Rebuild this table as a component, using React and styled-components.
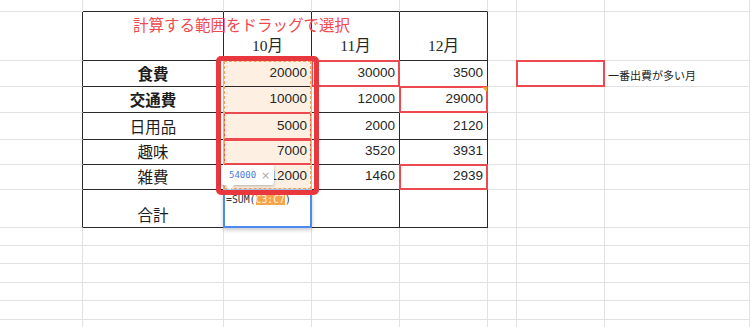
import React from 'react';
import styled, { createGlobalStyle, css } from 'styled-components';

const GlobalStyle = createGlobalStyle`
  html, body { margin: 0; padding: 0; background: #fff; }
  body {
    width: 750px; height: 327px; overflow: hidden;
    font-family: "Liberation Sans", "Noto Sans CJK JP", sans-serif;
  }
`;

const COLS = [83, 141, 88, 88, 88, 29, 88];
const ROWS = [12, 49, 26, 26, 27, 25, 25, 38, 18, 18, 19, 18, 19, 18];
const GRID = '#e2e2e2';
const INK = '#262626';
const MAXRED = '#ec4a50';

const Sheet = styled.div`
  position: relative;
  display: grid;
  grid-template-columns: ${COLS.map((c) => c + 'px').join(' ')} 1fr;
  grid-template-rows: ${ROWS.map((r) => r + 'px').join(' ')};
  width: 750px;
  height: 327px;
  overflow: hidden;
  background: #fff;
`;

const Cell = styled.div`
  position: relative;
  box-sizing: border-box;
  min-width: 0;
  border-right: 1px solid ${(p) => p.$rc};
  border-bottom: 1px solid ${(p) => p.$bc};
  background: ${(p) => (p.$fill ? '#fdf0e2' : 'transparent')};
  display: flex;
  align-items: ${(p) => (p.$top ? 'flex-start' : 'flex-end')};
  justify-content: ${(p) =>
    p.$align === 'right' ? 'flex-end' : p.$align === 'center' ? 'center' : 'flex-start'};
  padding: ${(p) => p.$pad || '0 4px 4px 4px'};
  white-space: nowrap;
  ${(p) =>
    p.$max &&
    css`
      &::after {
        content: '';
        position: absolute;
        top: -1px; left: -1px; right: -1px; bottom: -1px;
        border: 2px solid ${MAXRED};
        z-index: 2;
        pointer-events: none;
      }
    `}
  ${(p) =>
    p.$comment &&
    css`
      &::before {
        content: '';
        position: absolute;
        top: 0; right: 0;
        border-left: 5px solid transparent;
        border-top: 5px solid #f5a12e;
        z-index: 3;
      }
    `}
  ${(p) =>
    p.$active &&
    css`
      z-index: 3;
      &::after {
        content: '';
        position: absolute;
        top: -1px; left: -1px; right: -1px; bottom: -1px;
        border: 2px solid #4d8af0;
        box-shadow: 0 2px 4px rgba(0, 0, 0, 0.22);
        pointer-events: none;
      }
    `}
`;

const Heading = styled.span`
  position: relative;
  z-index: 4;
  font-family: "Noto Sans CJK JP", sans-serif;
  font-size: 15.5px;
  line-height: 20px;
  color: #ef4a50;
`;

const Month = styled.span`
  font-family: "Liberation Serif", "Noto Sans CJK JP", serif;
  font-size: 15.5px;
  line-height: 18px;
  color: ${INK};
`;

const Label = styled.span`
  font-family: "Noto Sans CJK JP", sans-serif;
  font-size: 15.5px;
  line-height: 18px;
  font-weight: ${(p) => (p.$bold ? 600 : 400)};
  color: #1c1c1c;
`;

const Num = styled.span`
  font-family: "Liberation Sans", Arial, sans-serif;
  font-size: 13.5px;
  line-height: 16px;
  color: ${INK};
`;

const Note = styled.span`
  font-family: "Noto Sans CJK JP", sans-serif;
  font-size: 11px;
  line-height: 14px;
  color: #222;
`;

const Formula = styled.span`
  position: relative;
  z-index: 4;
  font-family: "DejaVu Sans Mono", "Liberation Mono", monospace;
  font-size: 9.8px;
  line-height: 13px;
  color: #333;
`;

const Ref = styled.span`
  background: #f6a44c;
  color: #fff1e0;
`;

const Selection = styled.div`
  position: absolute;
  left: 223px;
  top: 60px;
  width: 89px;
  height: 130px;
  box-sizing: border-box;
  border: 1px solid #a6bfec;
  pointer-events: none;
  z-index: 5;
  &::after {
    content: '';
    position: absolute;
    inset: 0;
    border: 1px dashed #f0a25a;
  }
`;

const Callout = styled.div`
  position: absolute;
  left: 216px;
  top: 56px;
  width: 103px;
  height: 139px;
  box-sizing: border-box;
  border: 5px solid #e8383d;
  border-radius: 5px;
  pointer-events: none;
  z-index: 6;
`;

const Tip = styled.div`
  position: absolute;
  left: 221px;
  top: 165px;
  width: 53px;
  height: 20px;
  box-sizing: border-box;
  background: #fff;
  border-radius: 2px;
  box-shadow: 0 1px 3px rgba(0, 0, 0, 0.28);
  display: flex;
  align-items: center;
  gap: 5px;
  padding-left: 8px;
  z-index: 7;
  &::after {
    content: '';
    position: absolute;
    left: 5px;
    bottom: -5px;
    border-left: 4px solid transparent;
    border-right: 4px solid transparent;
    border-top: 5px solid #fff;
  }
`;

const TipValue = styled.span`
  font-family: "DejaVu Sans Mono", monospace;
  font-size: 9px;
  color: #4a7bd6;
`;

const TipClose = styled.span`
  font-family: "DejaVu Sans", sans-serif;
  font-size: 11px;
  color: #a8a8a8;
`;

const DATA = [
  { label: '食費', bold: true, vals: ['20000', '30000', '3500'], max: 3 },
  { label: '交通費', bold: true, vals: ['10000', '12000', '29000'], max: 4, comment: 4 },
  { label: '日用品', vals: ['5000', '2000', '2120'], max: 2 },
  { label: '趣味', vals: ['7000', '3520', '3931'], max: 2 },
  { label: '雑費', vals: ['12000', '1460', '2939'], max: 4 },
];

const MONTHS = ['10月', '11月', '12月'];

function cellProps(r, c) {
  const rc = r >= 1 && r <= 7 && c <= 4 ? '#2a2a2a' : GRID;
  const bc = r <= 7 && c >= 1 && c <= 4 ? '#2a2a2a' : GRID;
  return { $rc: rc, $bc: bc };
}

function renderCell(r, c) {
  const key = `${r}-${c}`;
  const base = cellProps(r, c);

  if (r === 1) {
    if (c === 1)
      return (
        <Cell key={key} {...base} $top $pad="2px 0 0 50px">
          <Heading>計算する範囲をドラッグで選択</Heading>
        </Cell>
      );
    if (c >= 2 && c <= 4)
      return (
        <Cell key={key} {...base} $align="center" $pad="0 0 5px 0">
          <Month>{MONTHS[c - 2]}</Month>
        </Cell>
      );
  }

  if (r >= 2 && r <= 6) {
    const d = DATA[r - 2];
    if (c === 1)
      return (
        <Cell key={key} {...base} $align="center" $pad="0 0 4px 0">
          <Label $bold={d.bold}>{d.label}</Label>
        </Cell>
      );
    if (c >= 2 && c <= 4)
      return (
        <Cell
          key={key}
          {...base}
          $align="right"
          $pad="0 4px 5px 0"
          $fill={c === 2}
          $max={d.max === c}
          $comment={d.comment === c}
        >
          <Num>{d.vals[c - 2]}</Num>
        </Cell>
      );
    if (r === 2 && c === 6) return <Cell key={key} {...base} $max />;
    if (r === 2 && c === 7)
      return (
        <Cell key={key} {...base} $pad="0 0 4px 3px">
          <Note>一番出費が多い月</Note>
        </Cell>
      );
  }

  if (r === 7) {
    if (c === 1)
      return (
        <Cell key={key} {...base} $align="center" $pad="0 0 4px 0">
          <Label>合計</Label>
        </Cell>
      );
    if (c === 2)
      return (
        <Cell key={key} {...base} $top $active $pad="3px 0 0 2px">
          <Formula>
            =SUM(<Ref>C3:C7</Ref>)
          </Formula>
        </Cell>
      );
  }

  return <Cell key={key} {...base} />;
}

export default function App() {
  const cells = [];
  for (let r = 0; r < ROWS.length; r++) {
    for (let c = 0; c < 8; c++) cells.push(renderCell(r, c));
  }
  return (
    <>
      <GlobalStyle />
      <Sheet>
        {cells}
        <Selection />
        <Callout />
        <Tip>
          <TipValue>54000</TipValue>
          <TipClose>×</TipClose>
        </Tip>
      </Sheet>
    </>
  );
}
